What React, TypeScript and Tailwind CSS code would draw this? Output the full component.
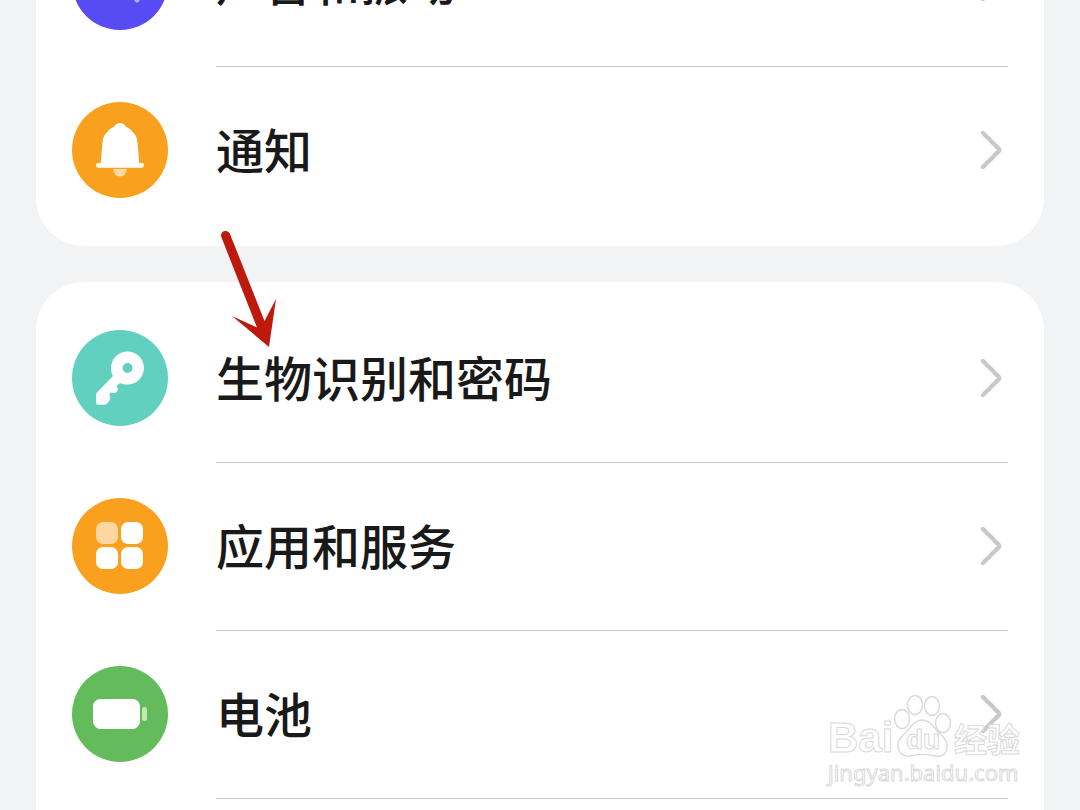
import type { ReactNode } from "react";

type RowProps = {
  label: string;
  color: string;
  icon: ReactNode;
  divider?: boolean;
};

function Chevron() {
  return (
    <svg width="24" height="42" viewBox="0 0 24 42" fill="none" className="mr-1 shrink-0" aria-hidden="true">
      <path
        d="M3 4 L18.5 19.5 Q20 21 18.5 22.5 L3 38"
        stroke="#c9c9c9"
        strokeWidth="4.4"
        strokeLinecap="round"
        strokeLinejoin="round"
      />
    </svg>
  );
}

function Row({ label, color, icon, divider }: RowProps) {
  return (
    <button type="button" className="flex h-[168px] w-full shrink-0 items-center pr-9 pl-9 text-left">
      <span className={`flex size-24 shrink-0 items-center justify-center rounded-full ${color}`}>
        {icon}
      </span>
      <span
        className={`ml-12 flex h-full flex-1 items-center justify-between border-t pb-px ${
          divider ? "border-[#cccccc]" : "border-transparent"
        }`}
      >
        <span className="pb-1 text-5xl font-medium text-[#191919]">{label}</span>
        <Chevron />
      </span>
    </button>
  );
}

function SoundIcon() {
  return (
    <svg width="96" height="96" viewBox="0 0 96 96" aria-hidden="true">
      <path d="M28 40 H38 L50 28 V64 L38 54 H28 Z" fill="#fff" />
      <path d="M58 34 Q72 47 65 66" stroke="#b9b2fb" strokeWidth="5" strokeLinecap="round" fill="none" />
    </svg>
  );
}

function BellIcon() {
  return (
    <svg width="96" height="96" viewBox="0 0 96 96" aria-hidden="true">
      <path
        d="M48 21 C45 21 43.5 22.5 42 24.8 C39 25.800 36.500 28 35 30.500 C31.500 33.500 31 36 30.500 41 L28.700 61 H26 Q24 61 24 63.300 Q24 65.700 26 65.700 H70 Q72 65.700 72 63.300 Q72 61 70 61 H67.300 L65.500 41 C65 36 64.500 33.500 61 30.500 C59.500 28 57 25.800 54 24.800 C52.500 22.500 51 21 48 21 Z"
        fill="#fff"
      />
      <path d="M41 67 H55 Q54 74.500 48 74.500 Q42 74.500 41 67 Z" fill="#fdd9a3" />
    </svg>
  );
}

function KeyIcon() {
  return (
    <svg width="96" height="96" viewBox="0 0 96 96" aria-hidden="true">
      <path
        fillRule="evenodd"
        d="M55.500 21.500 A16.500 16.500 0 1 1 55.500 54.500 C52.500 54.500 50.500 54 48 53 L44.500 56 Q47.500 60 44 62.500 Q42 63.500 39 62.500 Q36.500 63.500 38 67 Q39 69.500 37 71.500 L34.800 73.800 Q34 74.700 32.500 74.700 H26.500 Q24 74.700 24 72.500 V65 Q24 63.500 25 62.500 L41 46 C39.500 43.500 39 41 39 38 A16.500 16.500 0 0 1 55.500 21.500 Z M55.500 33 A5 5 0 1 0 55.500 43 A5 5 0 1 0 55.500 33 Z"
        fill="#fff"
      />
    </svg>
  );
}

function AppsIcon() {
  return (
    <svg width="96" height="96" viewBox="0 0 96 96" fill="#fff" aria-hidden="true">
      <rect x="24" y="24" width="22" height="22" rx="7" fill="#fdd6a0" />
      <rect x="49" y="24" width="22" height="22" rx="7" />
      <rect x="24" y="49" width="22" height="22" rx="7" />
      <rect x="49" y="49" width="22" height="22" rx="7" />
    </svg>
  );
}

function BatteryIcon() {
  return (
    <svg width="96" height="96" viewBox="0 0 96 96" aria-hidden="true">
      <rect x="21" y="33" width="47" height="30" rx="7.500" fill="#fff" />
      <rect x="70" y="41" width="5" height="14" rx="2.500" fill="#bfeab0" />
    </svg>
  );
}

// Red pointer laid over the list
function Arrow() {
  return (
    <svg
      width="60"
      height="120"
      viewBox="0 0 60 120"
      className="pointer-events-none absolute top-[228px] left-[220px]"
      aria-hidden="true"
    >
      <path
        d="M1.500 9.500 A4.600 4.600 0 0 1 9.800 5.500 L44.500 93 L56 71 L49 119 L12 88 L37 99.500 Z"
        fill="#bd1a0d"
      />
    </svg>
  );
}

function Watermark() {
  return (
    <div className="pointer-events-none absolute right-14 bottom-6 w-[196px] text-white/70 [-webkit-text-stroke:1px_#d9d9d9]">
      <div className="relative flex h-[68px] items-end justify-between pr-1">
        <span className="font-['Liberation_Sans'] text-[42px] leading-10 font-bold">Bai</span>
        <svg width="60" height="66" viewBox="0 0 60 66" className="absolute top-1 left-16" aria-hidden="true">
          <g fill="#fff" fillOpacity="0.6" stroke="#d9d9d9" strokeWidth="1.4">
            <ellipse cx="10" cy="25" rx="7.500" ry="9.500" />
            <ellipse cx="23" cy="11" rx="7.500" ry="9.500" />
            <ellipse cx="40" cy="12" rx="7.500" ry="9.500" />
            <ellipse cx="51" cy="29" rx="7.500" ry="9.500" />
            <path d="M30 26 C37 26 41 32 45 37 C50 42 55 45 55 52 C55 60 50 63 44 62 C36 60 26 60 18 62 C10 63 6 58 6 51 C6 44 12 41 16 36 C20 31 23 26 30 26 Z" />
          </g>
        </svg>
        <span className="absolute top-8 left-[78px] font-['Liberation_Sans'] text-[28px] leading-9 font-bold">du</span>
        <span className="text-[33px] leading-10 font-bold">经验</span>
      </div>
      <p className="font-['Noto_Sans'] text-[22px] leading-7">jingyan.baidu.com</p>
    </div>
  );
}

export default function App() {
  return (
    <main className="relative flex h-screen flex-col gap-9 overflow-hidden bg-[#f2f3f5] px-9 font-['Noto_Sans_CJK_SC',sans-serif]">
      <section className="shrink-0 rounded-b-[48px] bg-white pb-3">
        {/* scrolled so that only the lower edge of this row shows */}
        <div className="flex h-[66px] flex-col justify-end">
          <Row label="声音和振动" color="bg-[#574bf3]" icon={<SoundIcon />} />
        </div>
        <Row label="通知" color="bg-[#f9a01e]" icon={<BellIcon />} divider />
      </section>

      <section className="flex-1 rounded-t-[48px] bg-white pt-3">
        <Row label="生物识别和密码" color="bg-[#62d0be]" icon={<KeyIcon />} />
        <Row label="应用和服务" color="bg-[#f9a01e]" icon={<AppsIcon />} divider />
        <Row label="电池" color="bg-[#64bb5c]" icon={<BatteryIcon />} divider />
        <hr className="mr-9 ml-[180px] border-t border-[#cccccc]" />
      </section>

      <Arrow />
      <Watermark />
    </main>
  );
}
